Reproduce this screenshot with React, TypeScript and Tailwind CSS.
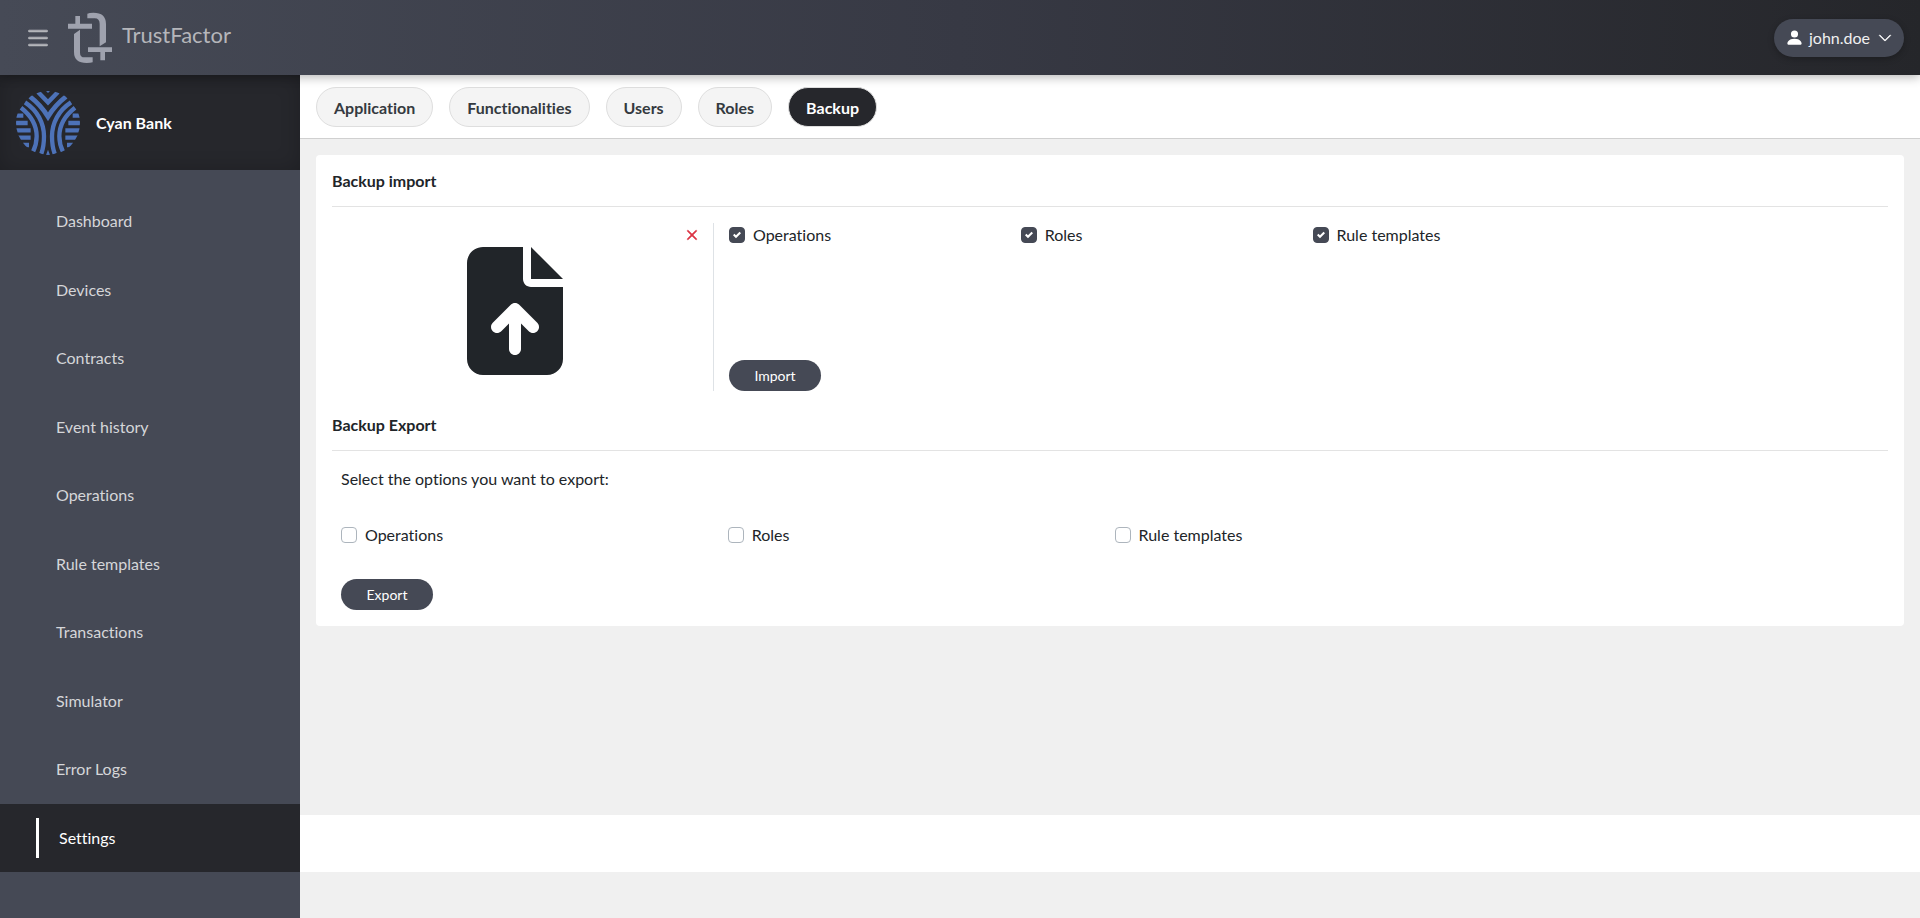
import { useState } from 'react';
import { BsChevronDown, BsList, BsPersonFill, BsX } from 'react-icons/bs';
import { FaFileArrowUp } from 'react-icons/fa6';

const NAV_ITEMS = [
  'Dashboard',
  'Devices',
  'Contracts',
  'Event history',
  'Operations',
  'Rule templates',
  'Transactions',
  'Simulator',
  'Error Logs',
  'Settings',
];

const TABS = ['Application', 'Functionalities', 'Users', 'Roles', 'Backup'];

const BACKUP_OPTIONS = ['Operations', 'Roles', 'Rule templates'];

function TrustFactorLogo() {
  return (
    <svg viewBox="0 0 156 180" className="h-[60px] w-[52px] fill-[#9fa2ae]" aria-hidden="true">
      <path d="M34 24H48V47H84V62H12V47H34Z" />
      <path d="M48 65V134Q48 148 62 148H86V163Q80 165 68 165Q30 165 30 132V78Z" />
      <path d="M70 17Q76 14 88 14Q126 14 126 48V103L107 115V48Q107 31 92 31H70Z" />
      <path d="M72 118H144V132H123V157H109V132H72Z" />
    </svg>
  );
}

/** One half of the bank mark, mirrored for the other side */
function BankLogoHalf() {
  return (
    <>
      <path d="M-69 -62C-32 -38 -12 0 -12 40C-12 60 -14 76 -20 92" />
      <path d="M-81 -46C-50 -22 -34 8 -34 40C-34 58 -38 72 -45 86" />
      <path d="M-97 -22H-74M-97 0H-61M-97 22H-52M-97 44H-52M-75 66H-57" />
    </>
  );
}

function BankLogo() {
  return (
    <svg viewBox="-96 -96 192 192" className="size-16 shrink-0" aria-hidden="true">
      <clipPath id="bank-circle">
        <circle r="96" />
      </clipPath>
      <g clipPath="url(#bank-circle)" fill="none" stroke="#4d72b8" strokeWidth="13" strokeLinejoin="miter">
        <BankLogoHalf />
        <g transform="scale(-1 1)">
          <BankLogoHalf />
        </g>
        <path d="M-30 -93L0 -62L30 -93" />
        <path d="M-54 -79C-32 -62 -14 -42 0 -19C14 -42 32 -62 54 -79" strokeWidth="14" />
        <path d="M-6 -96L0 -90L6 -96ZM0 80L-6 96H6Z" fill="#4d72b8" stroke="none" />
      </g>
    </svg>
  );
}

interface OptionProps {
  id: string;
  label: string;
  defaultChecked?: boolean;
}

function Option({ id, label, defaultChecked }: OptionProps) {
  return (
    <div className="flex items-center gap-2">
      <span className="grid place-items-center">
        <input
          id={id}
          type="checkbox"
          defaultChecked={defaultChecked}
          className="peer col-start-1 row-start-1 size-4 appearance-none rounded-sm border border-[#adb5bd] bg-white checked:border-[#454955] checked:bg-[#454955]"
        />
        <svg
          viewBox="0 0 8 8"
          className="pointer-events-none col-start-1 row-start-1 hidden size-2 fill-white peer-checked:block"
        >
          <path d="M6.564.75l-3.59 3.612-1.538-1.55L0 4.26l2.974 2.99L8 2.193z" />
        </svg>
      </span>
      <label htmlFor={id}>{label}</label>
    </div>
  );
}

function Header() {
  return (
    <header className="z-10 flex h-[75px] shrink-0 items-center bg-linear-to-r from-[#464a56] via-[#373944] to-[#25262a] pr-4 pl-6 shadow-[0_2px_10px_rgba(0,0,0,0.3)]">
      <button type="button" aria-label="Toggle menu" className="text-[#b5b6bb]">
        <BsList size={28} strokeWidth={0.4} />
      </button>
      <a href="#" className="ml-3 flex items-center gap-[6px] text-[#b5b6bb]">
        <TrustFactorLogo />
        <span className="pb-[6px] text-[22px] leading-6">TrustFactor</span>
      </a>
      <button
        type="button"
        className="ml-auto flex h-[38px] items-center rounded-full bg-[#454955] pr-3 pl-[11px] text-white shadow-[0_2px_6px_rgba(0,0,0,0.25)]"
      >
        <BsPersonFill size={19} />
        <span className="mr-2 ml-[5px] text-[#f0f0f0]">john.doe</span>
        <BsChevronDown size={14} strokeWidth={0.6} />
      </button>
    </header>
  );
}

function Sidebar() {
  return (
    <aside className="w-[300px] shrink-0 bg-[#454955]">
      <div className="flex h-[95px] items-center gap-4 bg-[#26272c] px-4 shadow-[inset_0_0_20px_rgba(0,0,0,0.2)]">
        <BankLogo />
        <span className="font-bold text-white">Cyan Bank</span>
      </div>
      <nav className="mt-[17px] flex h-[685px] flex-col">
        {NAV_ITEMS.map((item) =>
          item === 'Settings' ? (
            <a key={item} href="#" aria-current="page" className="flex flex-1 items-center bg-[#26272c] pl-9 text-white">
              <span className="flex h-10 items-center border-l-3 border-white pl-5">{item}</span>
            </a>
          ) : (
            <a key={item} href="#" className="flex flex-1 items-center pl-14 text-[#d5d6d9]">
              {item}
            </a>
          ),
        )}
      </nav>
    </aside>
  );
}

function Tabs() {
  const [active, setActive] = useState('Backup');

  return (
    <div role="tablist" className="flex gap-4 border-b border-[#d0d0d0] bg-white px-4 pt-3 pb-[11px]">
      {TABS.map((tab) => (
        <button
          key={tab}
          type="button"
          role="tab"
          aria-selected={tab === active}
          onClick={() => setActive(tab)}
          className={`h-10 rounded-full border border-[#dedede] px-[17px] pt-px font-bold ${
            tab === active ? 'bg-[#26272c] text-white' : 'bg-[#f4f4f4] text-[#343a40]'
          }`}
        >
          {tab}
        </button>
      ))}
    </div>
  );
}

function SectionTitle({ children }: { children: string }) {
  return <h2 className="border-b border-[#e3e3e3] pb-[15px] leading-5 font-bold">{children}</h2>;
}

function ActionButton({ children }: { children: string }) {
  return (
    <button type="button" className="h-[31px] w-[92px] rounded-full bg-[#454955] text-sm text-white">
      {children}
    </button>
  );
}

function BackupCard() {
  return (
    <div className="m-4 rounded bg-white p-4">
      <section>
        <SectionTitle>Backup import</SectionTitle>
        <div className="mt-4 flex h-[168px]">
          <div className="relative flex w-[382px] shrink-0 items-center justify-center border-r border-[#dee2e6] pt-2 pr-4">
            <FaFileArrowUp className="h-32 w-24 text-[#212529]" />
            <button type="button" aria-label="Remove file" className="absolute top-px right-[10px] text-[#dc3545]">
              <BsX size={22} strokeWidth={0.4} />
            </button>
          </div>
          <div className="-mr-2 flex flex-1 flex-col items-start justify-between pl-[15px]">
            <div className="grid w-full grid-cols-4">
              {BACKUP_OPTIONS.map((option) => (
                <Option key={option} id={`import-${option}`} label={option} defaultChecked />
              ))}
            </div>
            <ActionButton>Import</ActionButton>
          </div>
        </div>
      </section>

      <section className="mt-6">
        <SectionTitle>Backup Export</SectionTitle>
        <div className="mt-4 pl-[9px]">
          <p>Select the options you want to export:</p>
          <div className="my-8 grid grid-cols-4">
            {BACKUP_OPTIONS.map((option) => (
              <Option key={option} id={`export-${option}`} label={option} />
            ))}
          </div>
          <ActionButton>Export</ActionButton>
        </div>
      </section>
    </div>
  );
}

export default function App() {
  return (
    <div className="flex min-h-screen flex-col bg-[#f0f0f0] font-[Lato,sans-serif] text-base text-[#212529] [font-variant-ligatures:none]">
      <Header />
      <div className="flex flex-1">
        <Sidebar />
        <main className="flex min-w-0 flex-1 flex-col pb-[46px]">
          <Tabs />
          <div className="flex-1">
            <BackupCard />
          </div>
          <footer className="h-[57px] bg-white" />
        </main>
      </div>
    </div>
  );
}
